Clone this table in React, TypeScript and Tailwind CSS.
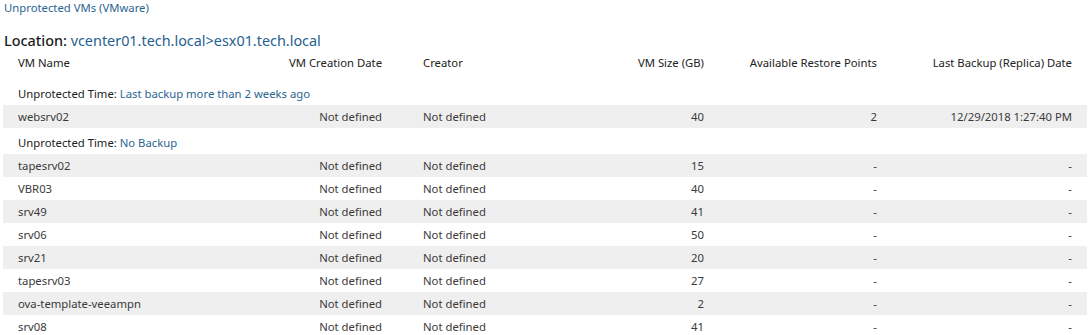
const GRID = "grid grid-cols-[247px_147px_163px_159px_173px_195px]";

type Row = {
  name: string;
  size: string;
  points: string;
  last: string;
};

const groups: { label: string; rows: Row[] }[] = [
  {
    label: "Last backup more than 2 weeks ago",
    rows: [{ name: "websrv02", size: "40", points: "2", last: "12/29/2018 1:27:40 PM" }],
  },
  {
    label: "No Backup",
    rows: [
      { name: "tapesrv02", size: "15", points: "-", last: "-" },
      { name: "VBR03", size: "40", points: "-", last: "-" },
      { name: "srv49", size: "41", points: "-", last: "-" },
      { name: "srv06", size: "50", points: "-", last: "-" },
      { name: "srv21", size: "20", points: "-", last: "-" },
      { name: "tapesrv03", size: "27", points: "-", last: "-" },
      { name: "ova-template-veeampn", size: "2", points: "-", last: "-" },
      { name: "srv08", size: "41", points: "-", last: "-" },
    ],
  },
];

function DataRow({ row, shaded }: { row: Row; shaded: boolean }) {
  return (
    <div className={`${GRID} h-[23px] items-center text-[#3a3a3a] ${shaded ? "bg-[#efefef]" : ""}`}>
      <div className="pl-[15px] truncate">{row.name}</div>
      <div className="pr-[15px] text-right">Not defined</div>
      <div className="pl-[26px]">Not defined</div>
      <div className="pr-[15px] text-right">{row.size}</div>
      <div className="pr-[15px] text-right">{row.points}</div>
      <div className="pr-[15px] text-right">{row.last}</div>
    </div>
  );
}

export default function App() {
  return (
    <div className="w-[1091px] h-[335px] overflow-hidden bg-white text-[11.3px] leading-4 font-['Noto_Sans',sans-serif]">
      <div className="pl-[4px] text-[#2a6592]">Unprotected VMs (VMware)</div>

      <div className="mt-[15px] pl-[4px] h-[20px] leading-5 text-[14.4px]">
        <span className="font-medium text-[#1a1a1a]">Location: </span>
        <span className="text-[#1f6190]">vcenter01.tech.local&gt;esx01.tech.local</span>
      </div>

      <div className="ml-[3px] w-[1084px]">
        <div className={`${GRID} h-[28px] pt-[4px] text-[#222]`}>
          <div className="pl-[15px]">VM Name</div>
          <div className="pr-[15px] text-right">VM Creation Date</div>
          <div className="pl-[26px]">Creator</div>
          <div className="pr-[15px] text-right">VM Size (GB)</div>
          <div className="pr-[15px] text-right">Available Restore Points</div>
          <div className="pr-[15px] text-right">Last Backup (Replica) Date</div>
        </div>

        {groups.map((g) => (
          <div key={g.label}>
            <div className="h-[26px] pt-[7px] pl-[15px] text-[#222]">
              Unprotected Time: <span className="text-[#2a6592]">{g.label}</span>
            </div>
            {g.rows.map((r, i) => (
              <DataRow key={r.name} row={r} shaded={i % 2 === 0} />
            ))}
          </div>
        ))}
      </div>
    </div>
  );
}
